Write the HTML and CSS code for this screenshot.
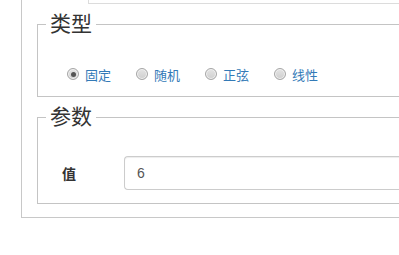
FILE: index.html
```html
<!DOCTYPE html>
<html lang="zh">
<head>
<meta charset="utf-8">
<link rel="stylesheet" href="styles.css">
</head>
<body>
<div class="panel">
  <div class="top-input"></div>
  <fieldset class="group group-type">
    <legend>类型</legend>
    <div class="radios">
      <label class="radio"><span class="dot checked"></span><span class="rtext">固定</span></label>
      <label class="radio"><span class="dot"></span><span class="rtext">随机</span></label>
      <label class="radio"><span class="dot"></span><span class="rtext">正弦</span></label>
      <label class="radio"><span class="dot"></span><span class="rtext">线性</span></label>
    </div>
  </fieldset>
  <fieldset class="group group-param">
    <legend>参数</legend>
    <div class="row">
      <label class="field-label">值</label>
      <div class="input">6</div>
    </div>
  </fieldset>
</div>
</body>
</html>
```

FILE: styles.css
```css
html, body {
  margin: 0;
  padding: 0;
  background: #fff;
  overflow: hidden;
}
body {
  font-family: "Liberation Sans", "Noto Sans CJK SC", sans-serif;
  font-size: 14px;
  color: #333;
  width: 399px;
  height: 255px;
}
.panel {
  margin-left: 21px;
  width: 460px;
  border-left: 1px solid #c8c8c8;
  border-bottom: 1px solid #c8c8c8;
  padding: 0 0 13px 15px;
}
.top-input {
  margin-left: 51px;
  height: 3px;
  border: 1px solid #dcdcdc;
  border-top: none;
  border-right: none;
}
.group {
  margin: 5px 0 0 0;
  border: 1px solid #c4c4c4;
  padding: 0 8px;
  min-width: 0;
}
.group legend {
  font-size: 21px;
  line-height: 30px;
  padding: 0 4px;
  color: #333;
}
.radios {
  display: flex;
  align-items: center;
  gap: 25px;
  margin-top: 25px;
  padding-left: 21px;
  padding-bottom: 12px;
  height: 20px;
}
.radio {
  display: flex;
  align-items: center;
  font-size: 13px;
  color: #337ab7;
}
.dot {
  width: 10px;
  height: 10px;
  border-radius: 50%;
  border: 1px solid #a6a6a6;
  background: linear-gradient(#e4e4e4, #cfcfcf);
  margin-right: 6px;
  position: relative;
  box-shadow: inset 0 0 0 1px #f2f2f2;
}
.dot.checked::after {
  content: "";
  position: absolute;
  left: 2.5px;
  top: 2.5px;
  width: 5px;
  height: 5px;
  border-radius: 50%;
  background: #555;
}
.row {
  display: flex;
  align-items: center;
  margin-top: 24px;
  padding-bottom: 13px;
  padding-left: 16px;
}
.field-label {
  width: 62px;
  font-weight: bold;
  font-size: 14px;
  color: #333;
}
.input {
  flex: 1;
  height: 20px;
  line-height: 20px;
  padding: 6px 12px;
  border: 1px solid #ccc;
  border-right: none;
  border-radius: 4px 0 0 4px;
  box-shadow: inset 0 1px 1px rgba(0,0,0,.075);
  color: #555;
  font-size: 14px;
}
```
